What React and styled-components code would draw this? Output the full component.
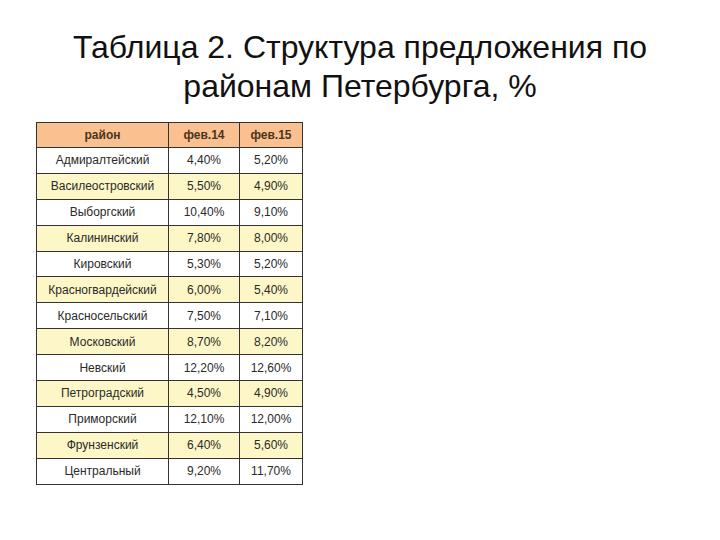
import React from "react";
import styled, { createGlobalStyle } from "styled-components";

const rows = [
  ["Адмиралтейский", "4,40%", "5,20%"],
  ["Василеостровский", "5,50%", "4,90%"],
  ["Выборгский", "10,40%", "9,10%"],
  ["Калининский", "7,80%", "8,00%"],
  ["Кировский", "5,30%", "5,20%"],
  ["Красногвардейский", "6,00%", "5,40%"],
  ["Красносельский", "7,50%", "7,10%"],
  ["Московский", "8,70%", "8,20%"],
  ["Невский", "12,20%", "12,60%"],
  ["Петроградский", "4,50%", "4,90%"],
  ["Приморский", "12,10%", "12,00%"],
  ["Фрунзенский", "6,40%", "5,60%"],
  ["Центральный", "9,20%", "11,70%"],
];

const GlobalStyle = createGlobalStyle`
  body {
    margin: 0;
    background: #ffffff;
    font-family: "Liberation Sans", Arial, sans-serif;
  }
`;

const Slide = styled.div`
  width: 720px;
  height: 540px;
  display: flex;
  flex-direction: column;
  align-items: flex-start;
  padding-top: 28px;
  box-sizing: border-box;
`;

const Title = styled.h1`
  align-self: stretch;
  margin: 0;
  font-weight: normal;
  font-size: 32px;
  line-height: 39px;
  text-align: center;
  color: #111;
`;

const Table = styled.table`
  margin: 16px 0 0 36px;
  width: 263px;
  table-layout: fixed;
  border-collapse: collapse;
  font-size: 12px;
  color: #2a2a2a;
`;

const Th = styled.th`
  height: 24px;
  width: ${({ $w }) => $w}px;
  padding: 0;
  border: 1px solid #333;
  background: #fac090;
  font-size: 12px;
  font-weight: bold;
  color: #4a3420;
`;

const Row = styled.tr`
  background: ${({ $alt }) => ($alt ? "#fdf6c6" : "#ffffff")};
`;

const Td = styled.td`
  height: 24.9px;
  padding: 0;
  border: 1px solid #333;
  text-align: center;
  white-space: nowrap;
`;

export default function App() {
  return (
    <Slide>
      <GlobalStyle />
      <Title>
        Таблица 2. Структура предложения по
        <br />
        районам Петербурга, %
      </Title>
      <Table>
        <thead>
          <tr>
            <Th $w={131}>район</Th>
            <Th $w={70}>фев.14</Th>
            <Th $w={62}>фев.15</Th>
          </tr>
        </thead>
        <tbody>
          {rows.map((r, i) => (
            <Row key={r[0]} $alt={i % 2 === 1}>
              <Td>{r[0]}</Td>
              <Td>{r[1]}</Td>
              <Td>{r[2]}</Td>
            </Row>
          ))}
        </tbody>
      </Table>
    </Slide>
  );
}
